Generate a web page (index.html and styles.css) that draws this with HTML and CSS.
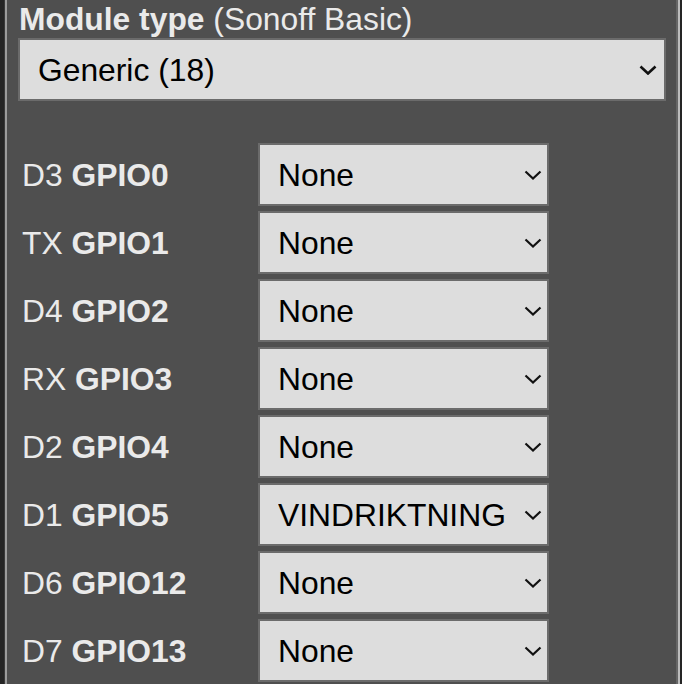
FILE: index.html
```html
<!DOCTYPE html>
<html>
<head>
<meta charset="utf-8">
<link rel="stylesheet" href="styles.css">
</head>
<body>
<div class="page">
  <fieldset class="panel">
    <div class="label"><b>Module type</b> (Sonoff Basic)</div>
    <div class="sel wide">
      <select><option>Generic (18)</option></select>
      <svg class="chev" width="18" height="10" viewBox="0 0 18 10"><path d="M1.5 1.5 L9 8.5 L16.5 1.5" fill="none" stroke="#111" stroke-width="2.6"/></svg>
    </div>
    <div class="gpio">
      <div class="name">D3 <b>GPIO0</b></div>
      <div class="sel"><select><option>None</option></select><svg class="chev" width="18" height="10" viewBox="0 0 18 10"><path d="M1.5 1.5 L9 8.5 L16.5 1.5" fill="none" stroke="#111" stroke-width="2.2"/></svg></div>
      <div class="name">TX <b>GPIO1</b></div>
      <div class="sel"><select><option>None</option></select><svg class="chev" width="18" height="10" viewBox="0 0 18 10"><path d="M1.5 1.5 L9 8.5 L16.5 1.5" fill="none" stroke="#111" stroke-width="2.2"/></svg></div>
      <div class="name">D4 <b>GPIO2</b></div>
      <div class="sel"><select><option>None</option></select><svg class="chev" width="18" height="10" viewBox="0 0 18 10"><path d="M1.5 1.5 L9 8.5 L16.5 1.5" fill="none" stroke="#111" stroke-width="2.2"/></svg></div>
      <div class="name">RX <b>GPIO3</b></div>
      <div class="sel"><select><option>None</option></select><svg class="chev" width="18" height="10" viewBox="0 0 18 10"><path d="M1.5 1.5 L9 8.5 L16.5 1.5" fill="none" stroke="#111" stroke-width="2.2"/></svg></div>
      <div class="name">D2 <b>GPIO4</b></div>
      <div class="sel"><select><option>None</option></select><svg class="chev" width="18" height="10" viewBox="0 0 18 10"><path d="M1.5 1.5 L9 8.5 L16.5 1.5" fill="none" stroke="#111" stroke-width="2.2"/></svg></div>
      <div class="name">D1 <b>GPIO5</b></div>
      <div class="sel"><select><option>VINDRIKTNING</option></select><svg class="chev" width="18" height="10" viewBox="0 0 18 10"><path d="M1.5 1.5 L9 8.5 L16.5 1.5" fill="none" stroke="#111" stroke-width="2.2"/></svg></div>
      <div class="name">D6 <b>GPIO12</b></div>
      <div class="sel"><select><option>None</option></select><svg class="chev" width="18" height="10" viewBox="0 0 18 10"><path d="M1.5 1.5 L9 8.5 L16.5 1.5" fill="none" stroke="#111" stroke-width="2.2"/></svg></div>
      <div class="name">D7 <b>GPIO13</b></div>
      <div class="sel"><select><option>None</option></select><svg class="chev" width="18" height="10" viewBox="0 0 18 10"><path d="M1.5 1.5 L9 8.5 L16.5 1.5" fill="none" stroke="#111" stroke-width="2.2"/></svg></div>
    </div>
  </fieldset>
</div>
</body>
</html>
```

FILE: styles.css
```css
html, body {
  margin: 0;
  padding: 0;
  background: #252525;
  height: 684px;
  overflow: hidden;
}
body {
  font-family: "Liberation Sans", Arial, sans-serif;
  font-size: 31.8px;
  color: #eaeaea;
}
.page {
  padding-left: 4px;
  width: 676px;
  height: 684px;
  overflow: hidden;
}
.panel {
  margin: 0;
  min-width: 0;
  background: #4f4f4f;
  border: none;
  border-left: 1px solid #3a3a3a;
  box-shadow: inset 2px 0 0 #9c9c9c, inset -2px 0 0 #666666;
  border-right: 2px solid #bdbdbd;
  padding: 1px 10px 40px 13px;
  box-sizing: border-box;
  width: 676px;
}
.label {
  line-height: 36px;
  height: 36px;
  padding-left: 1px;
  white-space: nowrap;
}
.sel {
  position: relative;
  height: 63px;
  box-sizing: border-box;
}
.sel select {
  -webkit-appearance: none;
  appearance: none;
  width: 100%;
  height: 63px;
  box-sizing: border-box;
  margin: 0;
  border: 2px solid #6b6b6b;
  border-radius: 0;
  background: #dddddd;
  color: #000;
  font-family: "Liberation Sans", Arial, sans-serif;
  font-size: 31.8px;
  padding: 1px 40px 0 18px;
  outline: none;
}
.wide {
  margin-top: 1px;
  width: 648px;
}
.chev {
  position: absolute;
  right: 7px;
  top: 50%;
  margin-top: -5px;
  pointer-events: none;
}
.wide .chev {
  right: 9px;
}
.gpio {
  margin-top: 42px;
  display: grid;
  grid-template-columns: 240px 291px;
  row-gap: 5px;
}
.name {
  display: flex;
  align-items: center;
  padding-left: 4px;
  padding-top: 2px;
  white-space: pre;
}
```
